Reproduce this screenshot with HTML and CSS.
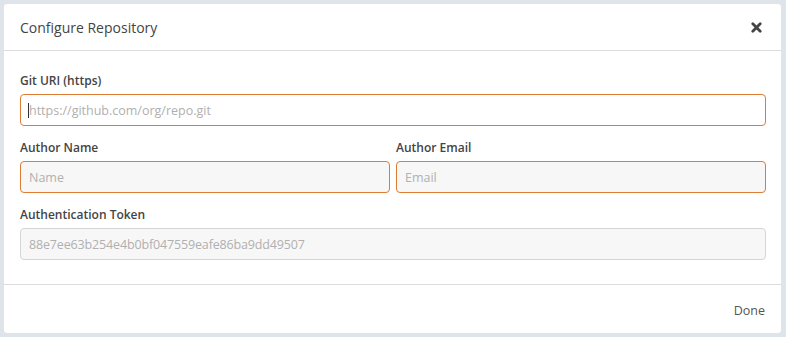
FILE: index.html
```html
<!DOCTYPE html>
<html>
<head>
<meta charset="utf-8">
<link rel="stylesheet" href="styles.css">
</head>
<body>
<div class="modal">
  <div class="modal-header">
    <h1 class="modal-title">Configure Repository</h1>
    <button class="close" aria-label="Close">
      <svg width="11" height="11" viewBox="0 0 11 11"><path d="M1.8 1.8 L9.2 9.2 M9.2 1.8 L1.8 9.2" stroke="#444" stroke-width="2.8" stroke-linecap="round"/></svg>
    </button>
  </div>
  <div class="modal-body">
    <div class="field">
      <label class="label">Git URI (https)</label>
      <div class="input focus"><span class="caret"></span><span class="ph">https://github.com/org/repo.git</span></div>
    </div>
    <div class="row">
      <div class="field">
        <label class="label">Author Name</label>
        <div class="input grey warn"><span class="ph">Name</span></div>
      </div>
      <div class="field">
        <label class="label">Author Email</label>
        <div class="input grey warn"><span class="ph">Email</span></div>
      </div>
    </div>
    <div class="field">
      <label class="label">Authentication Token</label>
      <div class="input grey"><span class="ph token">88e7ee63b254e4b0bf047559eafe86ba9dd49507</span></div>
    </div>
  </div>
  <div class="modal-footer">
    <button class="done">Done</button>
  </div>
</div>
</body>
</html>
```
FILE: styles.css
```css
html, body {
  margin: 0;
  padding: 0;
}
body {
  background: #dfe4ea;
  font-family: "Open Sans", "Noto Sans", sans-serif;
  width: 786px;
  height: 337px;
  overflow: hidden;
}
.modal {
  margin: 4px 0 0 4px;
  width: 777px;
  height: 329px;
  background: #fff;
  border-radius: 3px;
  display: flex;
  flex-direction: column;
  box-sizing: border-box;
}
.modal-header {
  height: 46px;
  border-bottom: 1px solid #dcdcdc;
  display: flex;
  align-items: center;
  justify-content: space-between;
  padding: 0 16px;
  flex: none;
}
.modal-title {
  margin: 0;
  font-size: 14px;
  font-weight: 400;
  color: #444;
}
.close {
  border: 0;
  background: none;
  padding: 0;
  margin-right: 3px;
  display: flex;
  cursor: pointer;
}
.modal-body {
  padding: 22px 15px 0 16px;
  flex: 1;
  display: flex;
  flex-direction: column;
  gap: 14px;
}
.field {
  display: flex;
  flex-direction: column;
  gap: 5px;
}
.row {
  display: grid;
  grid-template-columns: 1fr 1fr;
  gap: 6px;
}
.label {
  font-size: 12px;
  font-weight: 600;
  color: #444;
  line-height: 16px;
}
.input {
  height: 32px;
  box-sizing: border-box;
  border: 1px solid #d6d6d6;
  border-radius: 4px;
  padding: 0 8px;
  display: flex;
  align-items: center;
  font-size: 12.5px;
}
.input.grey {
  background: #f7f7f7;
}
.input.focus {
  border-color: #df7c34;
  background: #fff;
}
.input.warn {
  border-color: #df7c34;
}
.ph {
  color: #b0b0b0;
}
.token {
  letter-spacing: -0.15px;
}
.caret {
  width: 1px;
  height: 15px;
  background: #333;
  margin-left: -1px;
}
.modal-footer {
  height: 49px;
  border-top: 1px solid #dcdcdc;
  box-sizing: border-box;
  display: flex;
  align-items: center;
  justify-content: flex-end;
  padding: 0 16px;
  flex: none;
}
.done {
  border: 0;
  background: none;
  font-family: inherit;
  font-size: 12.5px;
  color: #555;
  padding: 0;
  margin-top: 2px;
}
```
